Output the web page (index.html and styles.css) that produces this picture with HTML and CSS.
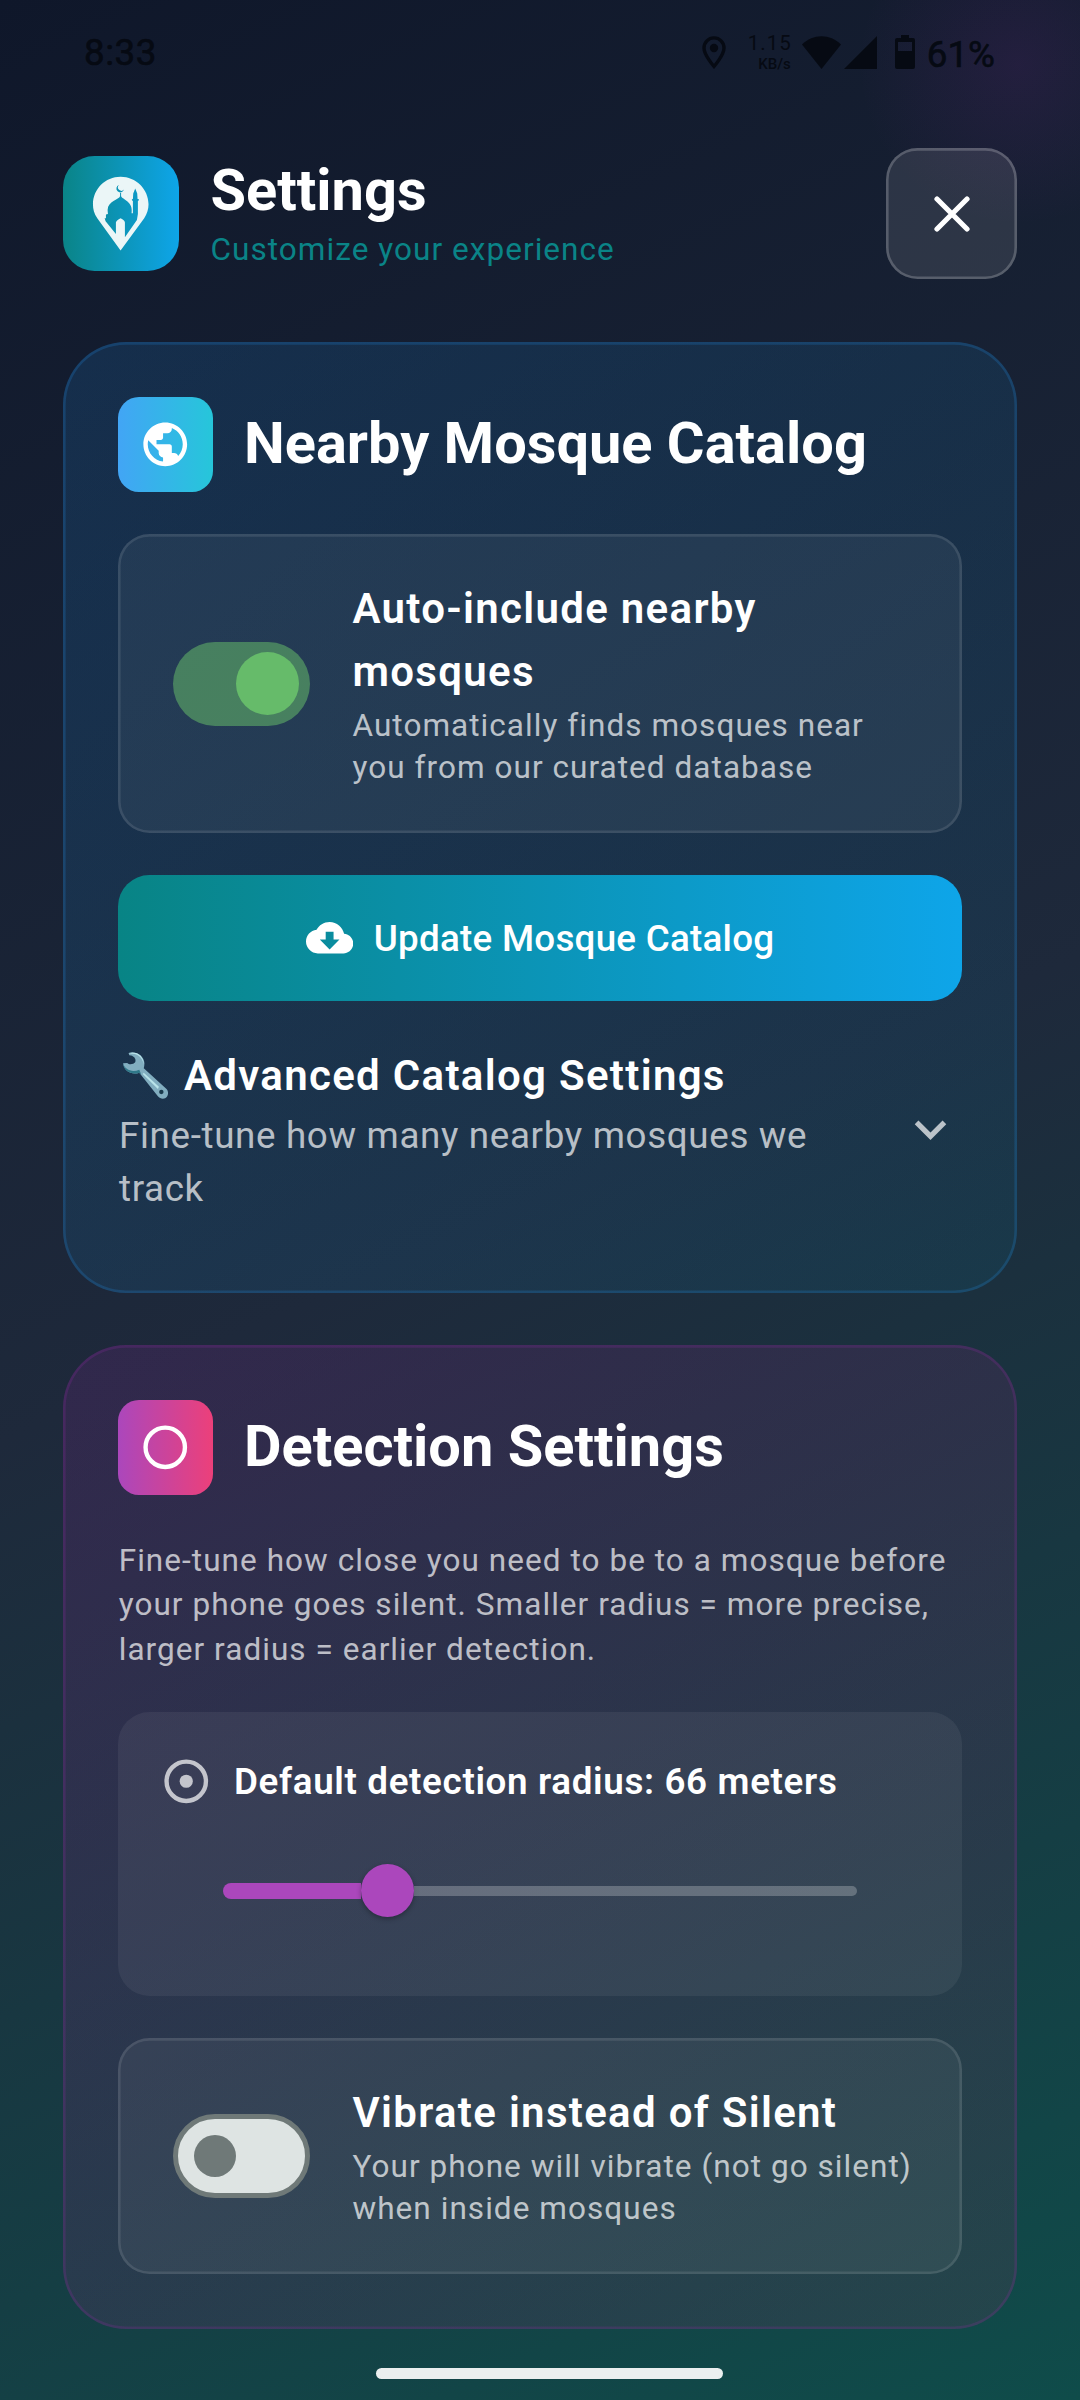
FILE: index.html
```html
<!DOCTYPE html>
<html lang="en">
<head>
<meta charset="utf-8">
<title>Settings</title>
<link rel="stylesheet" href="styles.css">
</head>
<body>
<div class="screen">
  <div class="status">
    <span class="clock">8:33</span>
    <div class="status-right">
      <svg class="st-pin" viewBox="0 0 24 33"><path d="M12 1.9C6.500 1.900 2 6.400 2 12c0 7 10 18.500 10 18.500S22 19 22 12C22 6.400 17.500 1.900 12 1.900z" fill="none" stroke="currentColor" stroke-width="3.400"/><circle cx="12" cy="12" r="4.200" fill="currentColor"/></svg>
      <div class="speed"><span class="rate">1.15</span><span class="unit">KB/s</span></div>
      <svg class="st-wifi" viewBox="0 0 39 33"><path d="M0 8.500C11 -2.500 28 -2.500 39 8.500L19.500 33z" fill="currentColor"/></svg>
      <svg class="st-signal" viewBox="0 0 33 33"><path d="M33 0V33H0z" fill="currentColor"/></svg>
      <svg class="st-battery" viewBox="0 0 20 34"><path fill-rule="evenodd" d="M6 0h8v3h4a2 2 0 0 1 2 2v27a2 2 0 0 1-2 2H2a2 2 0 0 1-2-2V5a2 2 0 0 1 2-2h4zM3 7v9h14V7z" fill="currentColor"/></svg>
      <span class="percent">61%</span>
    </div>
  </div>

  <header class="header">
    <div class="logo">
      <svg viewBox="9 16 347 347"><path fill="#ebf6f7" fill-rule="evenodd" d="M182 300L112 203C102 188 99 176 99 161C99 115 136 78 182 78S266 115 266 161C266 176 262 188 253 203ZM180.500 124V137C177 147 144 151 143 178L144 190L138 192V203H134L137 212L168 250V216Q170 208 182 203Q194 208 195 216V260L231 208L234 190V151L237 149V146L233 145L232 129L226 114L220 129L219 145L216 146V149L219 151V188H215C221 152 187 147 183.500 137V124ZM177 103A11.500 11.500 0 1 0 192 117A9.500 9.500 0 0 1 177 103Z"/></svg>
    </div>
    <div class="header-text">
      <h1>Settings</h1>
      <p>Customize your experience</p>
    </div>
    <button class="close" aria-label="Close"><svg viewBox="0 0 36 36"><path d="M3 3L33 33M33 3L3 33" stroke="#fff" stroke-width="5.200" stroke-linecap="round"/></svg></button>
  </header>

  <section class="card catalog">
    <div class="card-head">
      <div class="badge badge-blue"><svg viewBox="0 0 24 24"><path fill="#fff" d="M12 2C6.480 2 2 6.480 2 12s4.480 10 10 10 10-4.480 10-10S17.520 2 12 2zm-1 17.930c-3.950-.49-7-3.850-7-7.930 0-.62.08-1.210.21-1.790L9 15v1c0 1.100.9 2 2 2v1.930zm6.900-2.540c-.26-.81-1-1.390-1.900-1.390h-1v-3c0-.55-.45-1-1-1H8v-2h2c.55 0 1-.45 1-1V7h2c1.100 0 2-.9 2-2v-.41c2.930 1.190 5 4.060 5 7.410 0 2.080-.8 3.970-2.100 5.390z"/></svg></div>
      <h2>Nearby Mosque Catalog</h2>
    </div>
    <div class="tile">
      <div class="switch on"><i></i></div>
      <div class="tile-text">
        <h3>Auto-include nearby<br>mosques</h3>
        <p>Automatically finds mosques near<br>you from our curated database</p>
      </div>
    </div>
    <button class="update">
      <svg viewBox="0 0 24 24"><path fill="#fff" d="M19.350 10.040C18.670 6.590 15.640 4 12 4 9.110 4 6.600 5.640 5.350 8.040 2.340 8.360 0 10.910 0 14c0 3.310 2.690 6 6 6h13c2.760 0 5-2.240 5-5 0-2.640-2.050-4.780-4.650-4.960zM17 13l-5 5-5-5h3V9h4v4h3z"/></svg>
      <span>Update Mosque Catalog</span>
    </button>
    <div class="advanced">
      <div class="advanced-text">
        <h3><svg class="wrench" viewBox="205 600 145 150" preserveAspectRatio="none"><path d="M227 609C250 602 272 617 273 640C273 646 272 651 271 655L337 717C344 725 343 739 333 745C325 748 317 745 312 739L258 668C240 675 214 668 211 640L223 639C229 646 242 643 246 637C250 629 244 617 229 616Z" fill="#82aec0"/><path d="M227 609C250 602 272 617 271 645C270 630 258 610 236 611Z" fill="#b9e4ea"/><path d="M211 640C216 660 238 668 258 659L264 674L258 668C240 675 214 668 211 640ZM229 616C244 617 250 629 246 637C249 623 240 618 229 616Z" fill="#2f7889"/><path d="M271 668L315 710L312 717L268 672Z" fill="#b9e4ea"/><circle cx="322" cy="726" r="6.500" fill="#193a4c"/></svg>Advanced Catalog Settings</h3>
        <p>Fine-tune how many nearby mosques we<br>track</p>
      </div>
      <svg class="chevron" viewBox="0 0 24 24"><path fill="#fff" fill-opacity=".7" d="M16.590 8.590L12 13.170 7.410 8.590 6 10l6 6 6-6z"/></svg>
    </div>
  </section>

  <section class="card detection">
    <div class="card-head">
      <div class="badge badge-pink"><svg viewBox="0 0 24 24"><circle cx="12" cy="12" r="9" fill="none" stroke="#fff" stroke-width="2"/></svg></div>
      <h2>Detection Settings</h2>
    </div>
    <p class="intro">Fine-tune how close you need to be to a mosque before<br>your phone goes silent. Smaller radius = more precise,<br>larger radius = earlier detection.</p>
    <div class="radius-box">
      <div class="radius-label">
        <svg viewBox="0 0 24 24"><circle cx="12" cy="12" r="9" fill="none" stroke="#fff" stroke-width="2"/><circle cx="12" cy="12" r="3" fill="#fff"/></svg>
        <span>Default detection radius: 66 meters</span>
      </div>
      <div class="slider"><div class="fill"></div><div class="thumb"></div><div class="rest"></div></div>
    </div>
    <div class="tile">
      <div class="switch off"><i></i></div>
      <div class="tile-text">
        <h3>Vibrate instead of Silent</h3>
        <p>Your phone will vibrate (not go silent)<br>when inside mosques</p>
      </div>
    </div>
  </section>
  <div class="home-bar"></div>
</div>
</body>
</html>
```

FILE: styles.css
```css
* { box-sizing: border-box; margin: 0; padding: 0; }
body { width: 1080px; height: 2400px; overflow: hidden; font-family: Roboto, sans-serif; color: #fff; }
svg { display: block; flex: none; }
button { border: 0; font: inherit; color: inherit; }
.screen {
  width: 1080px; height: 2400px; padding: 0 63px;
  display: flex; flex-direction: column;
  background:
    radial-gradient(circle 160px at 1018px 65px, rgba(156, 39, 176, .11), rgba(156, 39, 176, 0)),
    linear-gradient(155.770deg, #0f172a 0%, #1e293b 50%, #0f4c4a 100%);
}

.status { height: 148px; display: flex; justify-content: space-between; color: #060a13; padding: 30px 22px 0 21px; font-size: 36.750px; font-weight: 500; line-height: 44px; }
.clock { letter-spacing: .5px; padding-top: 1px; font-weight: 400; -webkit-text-stroke: .6px currentColor; }
.status-right { display: flex; align-items: flex-start; }
.st-pin { width: 24px; height: 33px; margin: 6px 24px 0 0; }
.speed { width: 41px; display: flex; flex-direction: column; align-items: flex-end; font-weight: 400; margin-right: 11px; }
.rate { font-size: 20.500px; line-height: 24px; margin-top: 1px; letter-spacing: 1px; margin-right: -1px; }
.unit { font-size: 15px; line-height: 18px; font-weight: 500; }
.st-wifi { width: 39px; height: 33px; margin: 6px 3px 0 0; }
.st-signal { width: 33px; height: 33px; margin: 6px 18px 0 0; }
.st-battery { width: 20px; height: 34px; margin: 5px 12px 0 0; }
.percent { font-size: 36.750px; padding-top: 3px; font-weight: 400; -webkit-text-stroke: .6px currentColor; }

.header { height: 131px; display: flex; align-items: center; margin-bottom: 63px; }
.logo { width: 115.500px; height: 115.500px; border-radius: 31.500px; background: linear-gradient(90deg, #0a8487, #0ea5e9); margin-right: 32px; }
.header-text { flex: 1; }
h1, h2 { font-size: 57.750px; font-weight: 700; line-height: 74px; }
h1 { line-height: 72px; }
h2 { margin-top: -4px; }
.header-text p { margin-top: 3px; margin-bottom: 3px; font-size: 31.500px; line-height: 42px; letter-spacing: 1.050px; color: #0a8487; }
.close { width: 131px; height: 131px; border-radius: 31.500px; background: rgba(255, 255, 255, .1); box-shadow: inset 0 0 0 2.625px rgba(255, 255, 255, .2); display: flex; align-items: center; justify-content: center; }
.close svg { width: 36px; height: 36px; }

.card { border-radius: 63px; padding: 55px; display: flex; flex-direction: column; }
.catalog { height: 951px; background: linear-gradient(135deg, rgba(33, 150, 243, .15), rgba(0, 172, 222, .07)); box-shadow: inset 0 0 0 2.625px rgba(33, 150, 243, .2); margin-bottom: 52px; }
.detection { height: 984px; background: linear-gradient(135deg, rgba(156, 39, 176, .15), rgba(233, 30, 99, .09)); box-shadow: inset 0 0 0 2.625px rgba(156, 39, 176, .2); }
.card-head { display: flex; align-items: center; gap: 31.500px; height: 95px; }
.badge { width: 94.500px; height: 94.500px; border-radius: 21px; display: flex; align-items: center; justify-content: center; }
.badge svg { width: 52.500px; height: 52.500px; }
.badge-blue { background: linear-gradient(90deg, #42a5f5, #26c6da); }
.badge-pink { background: linear-gradient(90deg, #ab47bc, #ec407a); }

.tile { border-radius: 31.500px; background: rgba(255, 255, 255, .055); box-shadow: inset 0 0 0 2.625px rgba(255, 255, 255, .1); padding: 43px 54px 43.500px 55px; margin-top: 42px; display: flex; align-items: center; gap: 43px; }
.switch { width: 136.500px; height: 84px; border-radius: 42px; flex: none; display: flex; align-items: center; margin-top: 1px; }
.switch i { border-radius: 50%; }
.on { background: rgba(102, 187, 106, .54); justify-content: flex-end; padding-right: 10.500px; }
.on i { width: 63px; height: 63px; background: #66bb6a; }
.off { background: #dee4e3; border: 5px solid #6f7978; padding-left: 16px; }
.off i { width: 42px; height: 42px; background: #6f7978; }
h3 { font-size: 42px; font-weight: 600; line-height: 63px; letter-spacing: 1.310px; white-space: nowrap; }
.tile-text p { margin-top: 2px; font-size: 31.500px; line-height: 42px; letter-spacing: 1.050px; color: rgba(255, 255, 255, .7); white-space: nowrap; }

.update { margin-top: 42px; height: 126px; flex: none; border-radius: 31.500px; background: linear-gradient(90deg, #088485, #0ea5e9); display: flex; align-items: center; justify-content: center; gap: 21px; font-size: 36.750px; font-weight: 500; letter-spacing: .26px; }
.update svg { width: 47.250px; height: 47.250px; }
.update span { padding-top: 2px; }

.advanced { margin-top: 43px; display: flex; align-items: center; justify-content: space-between; }
.advanced h3 { display: flex; align-items: center; }
.wrench { width: 50px; height: 50px; margin: 0 13.500px 0 2.500px; }
.advanced p { margin-top: 2px; padding-left: 1px; font-size: 36.750px; line-height: 53px; letter-spacing: .66px; color: rgba(255, 255, 255, .7); white-space: nowrap; }
.chevron { width: 63px; height: 63px; }

.intro { margin-top: 44px; padding-left: .7px; font-size: 31.500px; line-height: 44.250px; letter-spacing: 1.050px; color: rgba(255, 255, 255, .7); white-space: nowrap; }
.radius-box { margin-top: 40.500px; height: 284px; border-radius: 31.500px; background: rgba(255, 255, 255, .06); padding: 42px; }
.radius-label { display: flex; align-items: center; gap: 21.500px; height: 53px; font-size: 36.750px; font-weight: 600; letter-spacing: .66px; white-space: nowrap; }
.radius-label span { padding-top: 2px; }
.radius-label svg { width: 52.500px; height: 52.500px; opacity: .7; }
.slider { display: flex; align-items: center; height: 53px; margin: 57px 63px 0; }
.fill { width: 138px; height: 16px; border-radius: 8px 0 0 8px; background: #ab47bc; }
.thumb { width: 53px; height: 53px; border-radius: 50%; background: #ab47bc; box-shadow: 0 2px 5px rgba(0, 0, 0, .3); flex: none; }
.rest { flex: 1; height: 10.500px; border-radius: 0 5.250px 5.250px 0; background: rgba(255, 255, 255, .24); }

.home-bar { width: 347px; height: 11px; border-radius: 6px; background: #ebefef; margin: 39px 0 0 313px; }
```
